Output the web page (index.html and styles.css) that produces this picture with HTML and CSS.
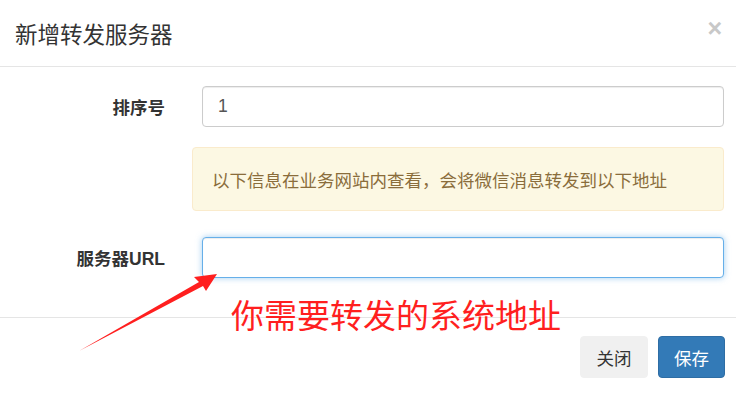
FILE: index.html
```html
<!DOCTYPE html>
<html lang="zh-CN">
<head>
    <meta charset="UTF-8">
    <meta name="viewport" content="width=device-width, initial-scale=1.0">
    <title>新增转发服务器</title>
    <link rel="stylesheet" href="styles.css">
</head>
<body>
    <div class="modal">
        <!-- 标题 -->
        <div class="modal-header">
            <h4 class="modal-title">新增转发服务器</h4>
            <button type="button" class="close">&times;</button>
        </div>

        <!-- 表单 -->
        <form class="modal-body">
            <div class="form-group">
                <label for="sort">排序号</label>
                <input type="text" id="sort" class="form-control" value="1">
            </div>
            <div class="alert">以下信息在业务网站内查看，会将微信消息转发到以下地址</div>
            <div class="form-group">
                <label for="url">服务器URL</label>
                <input type="text" id="url" class="form-control focus">
            </div>
        </form>

        <div class="modal-footer">
            <button type="button" class="btn btn-default">关闭</button>
            <button type="button" class="btn btn-primary">保存</button>
        </div>
    </div>

    <!-- 标注 -->
    <svg class="mark-arrow" width="736" height="393" viewBox="0 0 736 393">
        <polygon points="217,274 194,277 199,282 79,351 203,286 206,291" fill="#ff1f1f"/>
    </svg>
    <div class="mark-text">你需要转发的系统地址</div>
</body>
</html>
```

FILE: styles.css
```css
body {
    margin: 0;
    font-family: "Liberation Sans", "Noto Sans CJK SC", sans-serif;
    color: #333;
    background-color: #fff;
}
.modal {
    width: 736px;
    height: 393px;
}
.modal-header {
    height: 66px;
    padding: 0 14px 0 15px;
    border-bottom: 1px solid #e5e5e5;
    display: flex;
    align-items: center;
    justify-content: space-between;
}
.modal-title {
    margin: 0;
    font-size: 22.5px;
    font-weight: normal;
    color: #333;
}
.close {
    border: none;
    background: none;
    padding: 0;
    margin-top: -10px;
    font-family: "Liberation Sans", sans-serif;
    font-size: 25px;
    font-weight: bold;
    color: #c8c8c8;
}
.modal-body {
    margin: 0;
    padding: 19px 12px 39px 0;
    display: flex;
    flex-direction: column;
}
.form-group {
    display: flex;
    align-items: center;
}
.form-group label {
    width: 165px;
    margin-right: 37px;
    text-align: right;
    font-size: 17.5px;
    font-weight: bold;
}
.form-control {
    flex: 1;
    height: 41px;
    box-sizing: border-box;
    padding: 0 15px;
    border: 1px solid #ccc;
    border-radius: 4px;
    font-family: inherit;
    font-size: 17.5px;
    color: #555;
    box-shadow: inset 0 1px 1px rgba(0, 0, 0, 0.075);
    outline: none;
}
.form-control.focus {
    border-color: #66afe9;
    box-shadow: inset 0 1px 1px rgba(0, 0, 0, 0.075), 0 0 6px rgba(102, 175, 233, 0.6);
}
.alert {
    margin: 20px 0 26px 192px;
    height: 64px;
    box-sizing: border-box;
    padding: 0 19px;
    display: flex;
    align-items: center;
    background-color: #fcf8e3;
    border: 1px solid #faebcc;
    border-radius: 4px;
    color: #8a6d3b;
    font-size: 17.5px;
}
.modal-footer {
    border-top: 1px solid #e5e5e5;
    padding: 18px 11px 0 0;
    display: flex;
    justify-content: flex-end;
    gap: 10px;
}
.btn {
    height: 42px;
    padding: 0;
    border-radius: 4px;
    font-family: inherit;
    font-size: 17.5px;
    white-space: nowrap;
    cursor: pointer;
}
.btn-default {
    width: 68px;
    background-color: #f0f0f0;
    border: 1px solid #f0f0f0;
    color: #333;
}
.btn-primary {
    width: 67px;
    background-color: #337ab7;
    border: 1px solid #2e6da4;
    color: #fff;
}
.mark-arrow {
    position: absolute;
    left: 0;
    top: 0;
    pointer-events: none;
}
.mark-text {
    position: absolute;
    left: 231px;
    top: 298px;
    font-family: "Noto Sans CJK SC", sans-serif;
    font-size: 33px;
    line-height: 1;
    color: #ff1f1f;
    white-space: nowrap;
}
```
